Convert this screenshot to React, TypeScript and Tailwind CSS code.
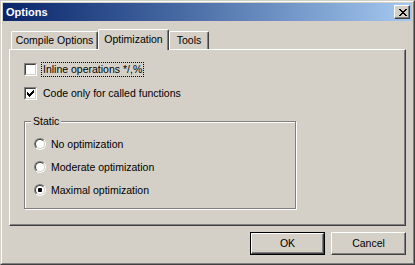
import { ReactNode } from "react";

// Pixel glyphs, drawn one rect per set pixel
const Pixels = ({ rows, color = "#000" }: { rows: string[]; color?: string }) => (
  <svg
    width={rows[0].length}
    height={rows.length}
    shapeRendering="crispEdges"
    className="block"
  >
    {rows.flatMap((row, y) =>
      row.split("").map((c, x) =>
        c === "X" ? <rect key={`${x}-${y}`} x={x} y={y} width={1} height={1} fill={color} /> : null
      )
    )}
  </svg>
);

const CHECK = [
  "......X",
  ".....XX",
  "X...XXX",
  "XX.XXX.",
  "XXXXX..",
  ".XXX...",
  "..X....",
];

const CLOSE_X = [
  "XX....XX",
  ".XX..XX.",
  "..XXXX..",
  "...XX...",
  "..XXXX..",
  ".XX..XX.",
  "XX....XX",
];

const Checkbox = ({ checked }: { checked?: boolean }) => (
  <div className="w-[13px] h-[13px] shrink-0 border border-t-[#808080] border-l-[#808080] border-r-white border-b-white">
    <div className="h-full border border-t-[#404040] border-l-[#404040] border-r-[#d4d0c8] border-b-[#d4d0c8] bg-white flex items-center justify-center">
      {checked && <Pixels rows={CHECK} />}
    </div>
  </div>
);

const Radio = ({ checked }: { checked?: boolean }) => (
  <div className="w-[12px] h-[12px] shrink-0 rounded-full border border-t-[#808080] border-l-[#808080] border-r-white border-b-white">
    <div className="h-full rounded-full border border-t-[#404040] border-l-[#404040] border-r-[#d4d0c8] border-b-[#d4d0c8] bg-white flex items-center justify-center">
      {checked && <div className="w-[4px] h-[4px] rounded-[1px] bg-black" />}
    </div>
  </div>
);

const Tab = ({ children, active, width }: { children: ReactNode; active?: boolean; width: string }) => (
  <div
    className={
      active
        ? `${width} h-[21px] -mb-px relative z-10 bg-[#d4d0c8] flex items-center justify-center pb-[2px] border-l border-t border-r border-l-white border-t-white border-r-[#404040] rounded-t-[2px] shadow-[inset_-1px_0_#808080]`
        : `${width} h-[18px] flex items-center justify-center border-l border-t border-r border-l-white border-t-white border-r-[#404040] rounded-t-[2px] shadow-[inset_-1px_0_#808080]`
    }
  >
    {children}
  </div>
);

const Button = ({ children, isDefault }: { children: ReactNode; isDefault?: boolean }) =>
  isDefault ? (
    <div className="w-[75px] h-[23px] border border-black">
      <div className="h-full border border-t-white border-l-white border-r-[#404040] border-b-[#404040] shadow-[inset_-1px_-1px_#808080] flex items-center justify-center">
        {children}
      </div>
    </div>
  ) : (
    <div className="w-[75px] h-[23px] border border-t-white border-l-white border-r-[#404040] border-b-[#404040] shadow-[inset_-1px_-1px_#808080] flex items-center justify-center">
      {children}
    </div>
  );

export default function App() {
  return (
    <div className="w-[415px] h-[265px] bg-[#d4d0c8] text-black text-[10.5px] leading-none font-['Liberation_Sans',Arial,sans-serif] border border-t-[#d4d0c8] border-l-[#d4d0c8] border-r-[#404040] border-b-[#404040]">
      <div className="h-full border border-t-white border-l-white border-r-[#808080] border-b-[#808080] p-px flex flex-col">
        {/* Title bar */}
        <div className="h-[18px] shrink-0 flex items-center justify-between pl-[3px] pr-[2px] bg-linear-to-r from-[#0a246a] to-[#a6caf0]">
          <span className="text-white font-bold text-[11px]">Options</span>
          <div className="w-[16px] h-[14px] border border-t-white border-l-white border-r-[#404040] border-b-[#404040] shadow-[inset_-1px_-1px_#808080] bg-[#d4d0c8] flex items-center justify-center pl-px">
            <Pixels rows={CLOSE_X} />
          </div>
        </div>

        <div className="flex flex-col px-[6px] pt-[8px]">
          {/* Tabs */}
          <div className="flex items-end pl-[2px]">
            <Tab width="w-[87px]">Compile Options</Tab>
            <Tab width="w-[71px]" active>
              Optimization
            </Tab>
            <Tab width="w-[40px]">Tools</Tab>
          </div>

          {/* Tab page */}
          <div className="h-[177px] border border-t-white border-l-white border-r-[#404040] border-b-[#404040] shadow-[inset_-1px_-1px_#808080] flex flex-col pl-[14px] pt-[12px]">
            <div className="flex items-center h-[15px]">
              <Checkbox />
              <span className="ml-[4px] h-[15px] px-px flex items-center border border-dotted border-black">
                Inline operations */,%
              </span>
            </div>
            <div className="flex items-center h-[15px] mt-[9px]">
              <Checkbox checked />
              <span className="ml-[4px] h-[15px] px-px flex items-center border border-transparent">
                Code only for called functions
              </span>
            </div>

            {/* Static group */}
            <div className="relative mt-[20px] w-[272px] h-[88px] border border-[#808080] shadow-[inset_1px_1px_white,1px_1px_white] flex flex-col pl-[9px] pt-[14px] gap-[7px]">
              <span className="absolute -top-[6px] left-[6px] px-[2px] bg-[#d4d0c8]">Static</span>
              {[
                { label: "No optimization" },
                { label: "Moderate optimization" },
                { label: "Maximal optimization", checked: true },
              ].map((opt) => (
                <div key={opt.label} className="flex items-center h-[16px]">
                  <Radio checked={opt.checked} />
                  <span className="ml-[5px]">{opt.label}</span>
                </div>
              ))}
            </div>
          </div>

          {/* Buttons */}
          <div className="flex justify-end gap-[6px] mt-[6px]">
            <Button isDefault>OK</Button>
            <Button>Cancel</Button>
          </div>
        </div>
      </div>
    </div>
  );
}
